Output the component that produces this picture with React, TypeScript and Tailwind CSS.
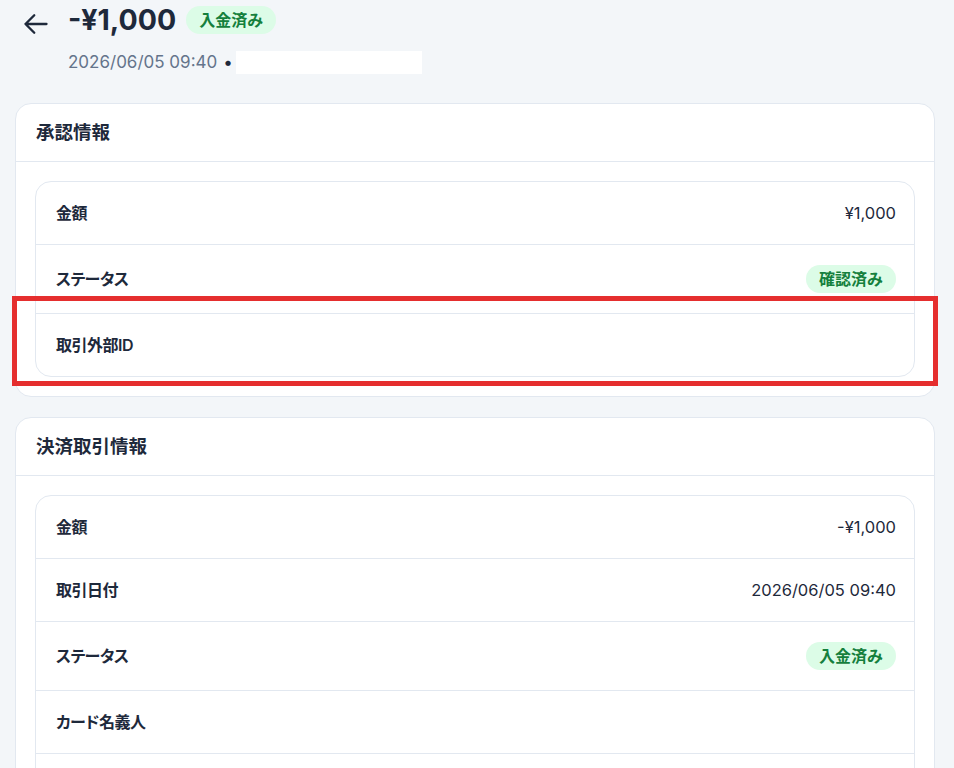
import { ReactNode } from 'react';

type Row = {
  label: string;
  value?: string;
  badge?: string;
};

const approvalRows: Row[] = [
  { label: '金額', value: '¥1,000' },
  { label: 'ステータス', badge: '確認済み' },
  { label: '取引外部ID' },
];

const paymentRows: Row[] = [
  { label: '金額', value: '-¥1,000' },
  { label: '取引日付', value: '2026/06/05 09:40' },
  { label: 'ステータス', badge: '入金済み' },
  { label: 'カード名義人' },
  { label: 'カード番号' },
];

function Badge({ children }: { children: ReactNode }) {
  return (
    <span className="inline-flex h-[28px] items-center rounded-full bg-[#dcfce7] px-[13px] text-[16px] font-semibold text-[#15803d]">
      {children}
    </span>
  );
}

function Section({ title, rows, children }: { title: string; rows: Row[]; children?: ReactNode }) {
  return (
    <section className="relative rounded-2xl border border-[#e2e8f0] bg-white">
      <div className="flex h-[58px] items-center border-b border-[#e2e8f0] px-5">
        <h2 className="text-[18.5px] font-semibold text-[#1e293b]">{title}</h2>
      </div>
      <div className="p-[19px]">
        <div className="rounded-2xl border border-[#e2e8f0]">
          {rows.map((row, i) => (
            <div
              key={row.label}
              className={`flex items-center justify-between py-5 pl-5 pr-[18px] ${i < rows.length - 1 ? 'border-b border-[#e2e8f0]' : ''}`}
            >
              <span className="text-[16px] leading-[22px] font-semibold tracking-[-0.03em] text-[#1e293b] [font-feature-settings:'palt']">
                {row.label}
              </span>
              {row.badge ? (
                <Badge>{row.badge}</Badge>
              ) : (
                <span className="text-[16.5px] leading-[22px] text-[#1e293b]">{row.value}</span>
              )}
            </div>
          ))}
        </div>
      </div>
      {children}
    </section>
  );
}

export default function App() {
  return (
    <div
      className="min-h-screen bg-[#f3f6f9] pl-[15px] pr-[19px] pt-[2px]"
      style={{ fontFamily: "Inter, 'Noto Sans CJK JP', sans-serif" }}
    >
      {/* ヘッダー */}
      <div className="flex items-start gap-[18px] pl-[7px]">
        <button className="mt-[8px] text-[#1e293b]">
          <svg width="28" height="28" viewBox="0 0 24 24" fill="none" stroke="currentColor" strokeWidth="2" strokeLinecap="round" strokeLinejoin="round">
            <path d="M10.5 19.5 3 12m0 0 7.5-7.5M3 12h18" />
          </svg>
        </button>
        <div>
          <div className="flex items-center gap-[10px]">
            <h1 className="text-[28.5px] leading-[36px] font-bold text-[#1e293b]">-¥1,000</h1>
            <Badge>入金済み</Badge>
          </div>
          <div className="mt-[12px] flex items-center text-[17px] leading-[24px] text-[#64748b]">
            <span>2026/06/05 09:40</span>
            <span className="ml-[6px] text-[#1e293b]">•</span>
            <span className="ml-[3px] h-[23px] w-[186px] bg-white" />
          </div>
        </div>
      </div>

      <div className="mt-[29px] flex flex-col gap-5">
        <Section title="承認情報" rows={approvalRows}>
          <div className="pointer-events-none absolute left-[-4px] top-[192px] h-[90px] w-[926px] border-[5px] border-[#e52e2e]" />
        </Section>
        <Section title="決済取引情報" rows={paymentRows} />
      </div>
    </div>
  );
}
